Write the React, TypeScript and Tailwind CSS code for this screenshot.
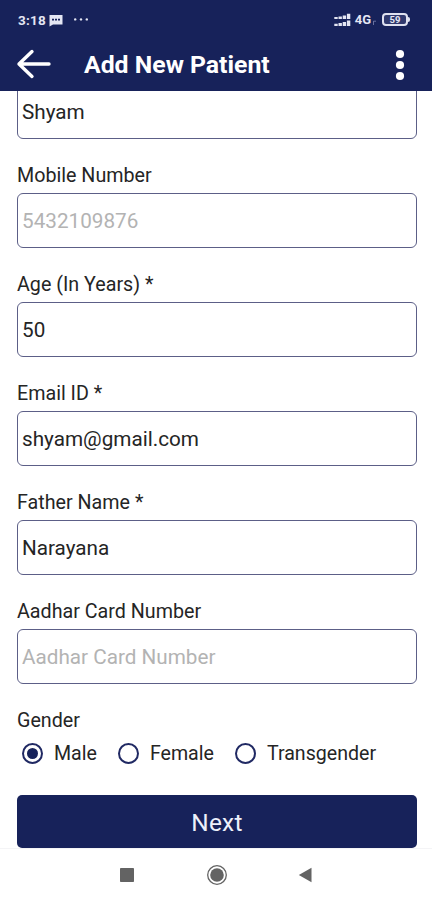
import { useState } from "react";

type FieldProps = {
  label?: string;
  placeholder?: string;
  defaultValue?: string;
};

const genders = [
  { name: "Male", gap: "mr-[21px]" },
  { name: "Female", gap: "mr-[21px]" },
  { name: "Transgender", gap: "" },
];

function StatusBar() {
  return (
    <div className="flex h-[38px] items-center justify-between pl-[18px] pr-[22px] text-[#e4e6f3]">
      <div className="flex h-full items-center pt-[2px]">
        <span className="text-[13.5px] font-bold leading-4 tracking-[0.2px]">3:18</span>
        <svg className="ml-[3px]" width="14" height="13" viewBox="0 0 14 13">
          <path d="M0.5 1h13v9.5H4L0.5 12.6z" fill="currentColor" />
          <path d="M3 5.6h2M6 5.6h2M9 5.6h2" stroke="#17225a" strokeWidth="1.6" />
        </svg>
        <svg className="ml-[10px]" width="16" height="4" viewBox="0 0 16 4">
          <circle cx="2.2" cy="1.4" r="1.2" fill="currentColor" />
          <circle cx="8" cy="1.4" r="1.2" fill="currentColor" />
          <circle cx="13.8" cy="1.4" r="1.2" fill="currentColor" />
        </svg>
      </div>
      <div className="flex h-full items-center pt-[1px]">
        <svg width="17" height="14" viewBox="0 0 17 14" stroke="currentColor" strokeWidth="3.4">
          <path d="M2 6V4M6.2 6V3.4M10.4 6V2.4M14.6 6V0.8" />
          <path d="M2 13v-2.3M6.2 13v-3M10.4 13V9M14.6 13V7.5" />
        </svg>
        <span className="ml-[4px] text-[13px] font-bold leading-4">4G</span>
        <svg className="ml-[2px] mt-[5px]" width="4" height="5" viewBox="0 0 4 5">
          <path d="M0.5 5V1M0.5 1.2H3" stroke="#68709f" fill="none" />
        </svg>
        <div className="ml-[5px] flex items-center">
          <div className="flex h-[13px] w-[26px] items-center justify-center rounded-[4px] border-2 border-[#dfe1f0] bg-[#30396e]">
            <span className="text-[9.5px] font-bold leading-none">59</span>
          </div>
          <div className="h-[5px] w-[2px] rounded-r-sm bg-[#dfe1f0]" />
        </div>
      </div>
    </div>
  );
}

function AppBar() {
  return (
    <div className="flex h-[53px] items-center pl-[16px] pr-[27px] text-white">
      <button type="button" aria-label="Back" className="-mt-[2px]">
        <svg width="36" height="32" viewBox="0 0 36 32" fill="none" stroke="currentColor" strokeWidth="3.4" strokeLinecap="round" strokeLinejoin="round">
          <path d="M33 16H3M16 3.6L3 16L16 28.4" />
        </svg>
      </button>
      <h1 className="ml-[32px] flex-1 pt-[1px] text-[24.8px] font-bold leading-8">Add New Patient</h1>
      <button type="button" aria-label="More options">
        <svg width="10" height="32" viewBox="0 0 10 32" fill="currentColor">
          <circle cx="5" cy="5" r="4.1" />
          <circle cx="5" cy="16" r="4.1" />
          <circle cx="5" cy="27" r="4.1" />
        </svg>
      </button>
    </div>
  );
}

function Field({ label, placeholder, defaultValue }: FieldProps) {
  return (
    <label className="mb-[22px] block shrink-0">
      {label && (
        <span className="block h-[32px] pt-[3px] text-[19.7px] leading-6">{label}</span>
      )}
      <input
        type="text"
        defaultValue={defaultValue}
        placeholder={placeholder}
        className="block h-[55px] w-full rounded-[6px] border border-[#5c5f87] bg-white px-[4px] pt-[1px] text-[20.7px] outline-none placeholder:text-[#b3b3b3]"
      />
    </label>
  );
}

function NavBar() {
  return (
    <div className="flex h-[52px] items-center border-t border-[#f4f4f6] bg-white pl-[120px] text-[#636363]">
      <svg width="14" height="14" viewBox="0 0 14 14">
        <rect width="14" height="14" rx="0.8" fill="currentColor" />
      </svg>
      <svg className="ml-[72px]" width="22" height="22" viewBox="0 0 22 22">
        <circle cx="11" cy="11" r="9.3" fill="none" stroke="currentColor" strokeWidth="1.3" />
        <circle cx="11" cy="11" r="6.8" fill="currentColor" />
      </svg>
      <svg className="ml-[70px]" width="14" height="16" viewBox="0 0 14 16">
        <path d="M13.5 0.7v14.6L0.8 8z" fill="currentColor" />
      </svg>
    </div>
  );
}

export default function App() {
  const [gender, setGender] = useState("Male");

  return (
    <div className="flex h-[900px] w-[432px] flex-col overflow-hidden bg-white font-[Roboto,sans-serif] text-[#252525]">
      <header className="shrink-0 bg-[#17225a]">
        <StatusBar />
        <AppBar />
      </header>

      <main className="flex min-h-0 flex-1 flex-col justify-end overflow-hidden pl-[17px] pr-[15px]">
        <Field defaultValue="Shyam" />
        <Field label="Mobile Number" placeholder="5432109876" />
        <Field label="Age (In Years) *" defaultValue="50" />
        <Field label="Email ID *" defaultValue="shyam@gmail.com" />
        <Field label="Father Name *" defaultValue="Narayana" />
        <Field label="Aadhar Card Number" placeholder="Aadhar Card Number" />

        <div className="h-[89px] shrink-0">
          <div className="h-[31px] pt-[3px] text-[19.7px] leading-6">Gender</div>
          <div className="flex items-center pl-[5px] pt-[3px]">
            {genders.map(({ name, gap }) => (
              <button
                key={name}
                type="button"
                onClick={() => setGender(name)}
                className={`flex items-center ${gap}`}
              >
                <span className="flex size-[21px] items-center justify-center rounded-full border-2 border-[#202963]">
                  {gender === name && <span className="size-[11px] rounded-full bg-[#17225a]" />}
                </span>
                <span className="ml-[11px] pt-[2px] text-[19.6px] leading-6">{name}</span>
              </button>
            ))}
          </div>
        </div>

        <button
          type="button"
          className="h-[53px] w-full shrink-0 rounded-[5px] bg-[#17225a] pt-[4px] text-[24.4px] tracking-[0.3px] text-[#edf0fb]"
        >
          Next
        </button>
      </main>

      <NavBar />
    </div>
  );
}
